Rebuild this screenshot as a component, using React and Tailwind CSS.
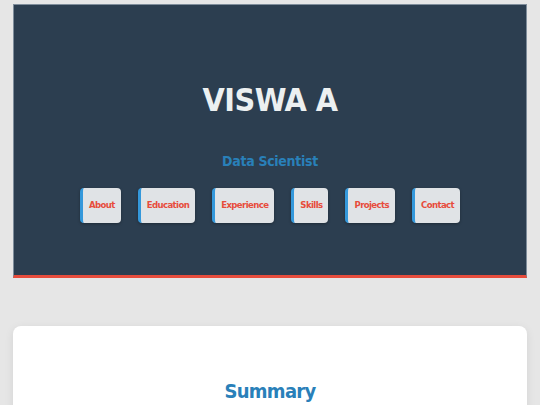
import React from "react";

const links = ["About", "Education", "Experience", "Skills", "Projects", "Contact"];

function App() {
  return (
    <div
      className="min-h-[405px] bg-[#e6e6e6] pt-[4px] px-[13px]"
      style={{ fontFamily: '"DejaVu Sans Condensed", "DejaVu Sans", sans-serif' }}
    >
      <header className="bg-[#2c3e50] border border-[#7f8d9b] border-b-[3px] border-b-[#e74c3c] pt-[76px] pb-[52px] flex flex-col items-center">
        <h1 className="text-[32px] leading-[38px] tracking-[-0.5px] font-bold text-[#ecf0f1]">VISWA A</h1>
        <p className="mt-[32px] text-[14px] leading-[20px] tracking-[-0.3px] font-bold text-[#2980b9]">Data Scientist</p>
        <nav className="mt-[17px] flex gap-[17px]">
          {links.map((l) => (
            <a
              key={l}
              className="h-[35px] flex items-center pl-[6px] pr-[6px] bg-[#e0e3e6] border-l-[3px] border-[#3498db] rounded-[4px] text-[9.5px] tracking-[-0.6px] font-bold text-[#e74c3c] shadow-[0_1px_3px_rgba(0,0,0,0.3)]"
            >
              {l}
            </a>
          ))}
        </nav>
      </header>
      <section className="mt-[48px] bg-white rounded-lg shadow-[0_2px_10px_rgba(0,0,0,0.08)] pt-[51px] pb-10 flex flex-col items-center">
        <h2 className="text-[20px] leading-[28px] tracking-[-0.7px] font-bold text-[#2980b9]">Summary</h2>
      </section>
    </div>
  );
}

export default App;
